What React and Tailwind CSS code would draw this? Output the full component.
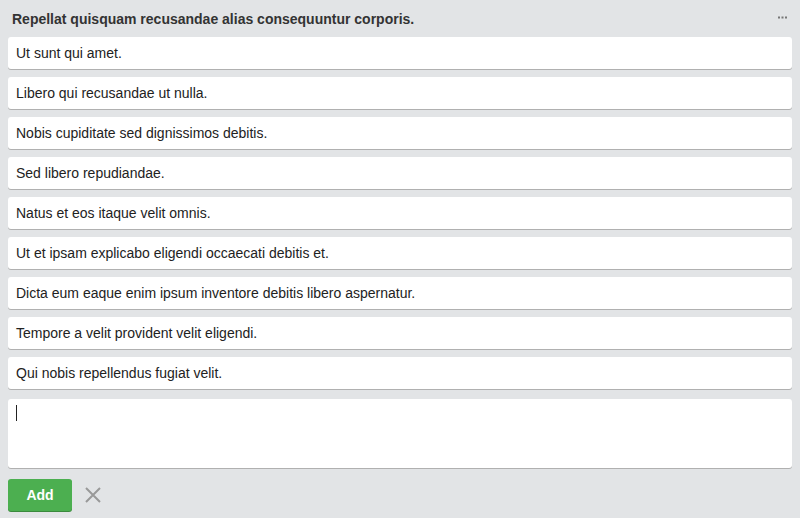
import { useState } from 'react';

const cards = [
  'Ut sunt qui amet.',
  'Libero qui recusandae ut nulla.',
  'Nobis cupiditate sed dignissimos debitis.',
  'Sed libero repudiandae.',
  'Natus et eos itaque velit omnis.',
  'Ut et ipsam explicabo eligendi occaecati debitis et.',
  'Dicta eum eaque enim ipsum inventore debitis libero aspernatur.',
  'Tempore a velit provident velit eligendi.',
  'Qui nobis repellendus fugiat velit.',
];

function App() {
  const [text, setText] = useState('');

  return (
    <div className="w-[800px] h-[518px] bg-[#e2e4e6] font-['Liberation_Sans',Arial,sans-serif] text-[#333] overflow-hidden">
      <div className="h-[37px] flex items-center justify-between pl-3 pr-[13px]">
        <h2 className="text-[14px] font-bold text-[#333] pt-px">Repellat quisquam recusandae alias consequuntur corporis.</h2>
        <svg width="9" height="3" viewBox="0 0 9 3" className="text-[#777] mb-[3px]">
          <rect x="0" y="0.5" width="2" height="2" fill="currentColor" />
          <rect x="3.5" y="0.5" width="2" height="2" fill="currentColor" />
          <rect x="7" y="0.5" width="2" height="2" fill="currentColor" />
        </svg>
      </div>
      <div className="px-2 flex flex-col gap-2">
        {cards.map((c) => (
          <div
            key={c}
            className="h-[32px] bg-white rounded-[3px] shadow-[0_1px_0_#b0b0b0] flex items-center px-2 text-[14px] text-[#222]"
          >
            {c}
          </div>
        ))}
        <div className="relative mt-[2px] h-[69px] bg-white rounded-[3px] shadow-[0_1px_0_#b0b0b0] px-2 py-[6px]">
          <textarea
            autoFocus
            value={text}
            onChange={(e) => setText(e.target.value)}
            className="w-full h-full resize-none outline-none text-[14px] bg-transparent caret-black"
          />
          {text === '' && (
            <span className="absolute left-2 top-[6px] w-px h-[16px] bg-[#222] pointer-events-none" />
          )}
        </div>
        <div className="flex items-center gap-3 mt-[3px]">
          <button className="w-16 h-8 rounded-[3px] bg-[#4caf50] text-white font-bold text-[14px] shadow-[0_1px_0_#3a8a3d]">
            Add
          </button>
          <svg width="18" height="18" viewBox="0 0 18 18" className="text-[#999]">
            <path d="M2 2 L16 16 M16 2 L2 16" stroke="currentColor" strokeWidth="2" />
          </svg>
        </div>
      </div>
    </div>
  );
}

export default App;
